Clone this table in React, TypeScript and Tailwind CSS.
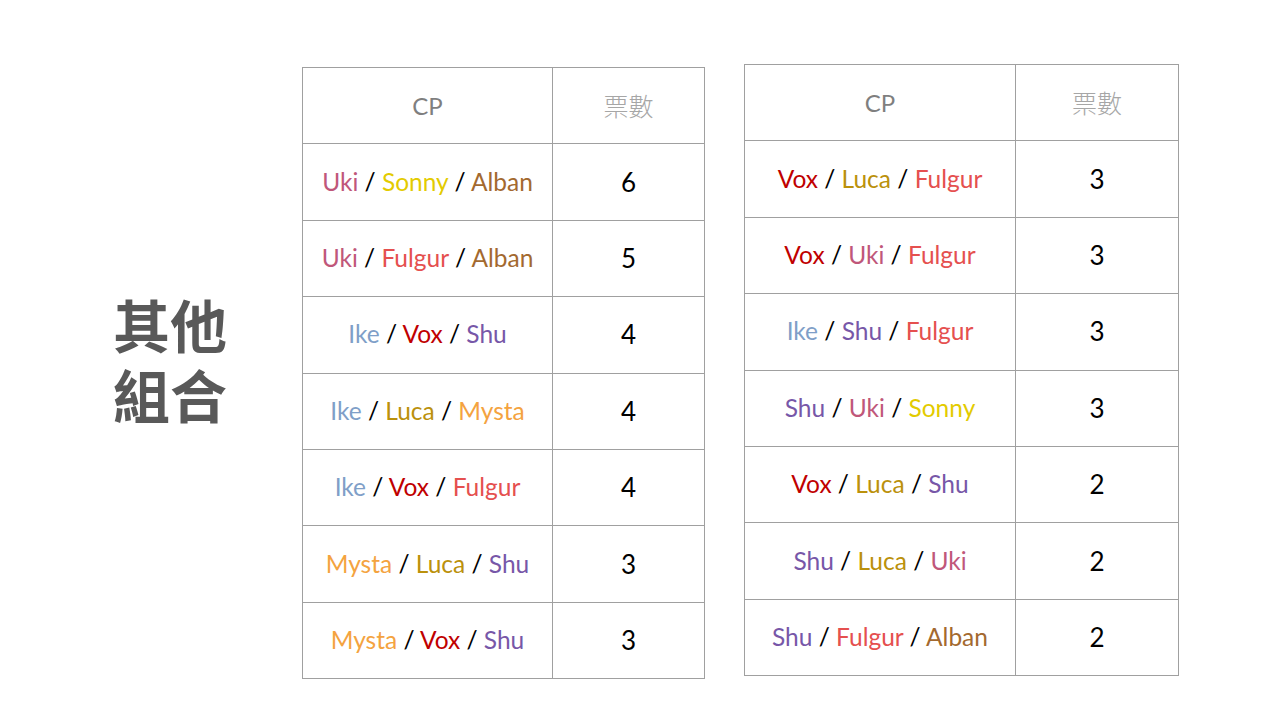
import React from "react";

const C: Record<string, string> = {
  Uki: "text-[#c0577a]",
  Sonny: "text-[#e3cb00]",
  Alban: "text-[#a3692f]",
  Fulgur: "text-[#e5504f]",
  Ike: "text-[#7f9fc8]",
  Vox: "text-[#c00000]",
  Shu: "text-[#7757a8]",
  Luca: "text-[#bb910c]",
  Mysta: "text-[#f4a340]",
};

const left: [string[], number][] = [
  [["Uki", "Sonny", "Alban"], 6],
  [["Uki", "Fulgur", "Alban"], 5],
  [["Ike", "Vox", "Shu"], 4],
  [["Ike", "Luca", "Mysta"], 4],
  [["Ike", "Vox", "Fulgur"], 4],
  [["Mysta", "Luca", "Shu"], 3],
  [["Mysta", "Vox", "Shu"], 3],
];

const right: [string[], number][] = [
  [["Vox", "Luca", "Fulgur"], 3],
  [["Vox", "Uki", "Fulgur"], 3],
  [["Ike", "Shu", "Fulgur"], 3],
  [["Shu", "Uki", "Sonny"], 3],
  [["Vox", "Luca", "Shu"], 2],
  [["Shu", "Luca", "Uki"], 2],
  [["Shu", "Fulgur", "Alban"], 2],
];

function Names({ names }: { names: string[] }) {
  return (
    <>
      {names.map((n, i) => (
        <React.Fragment key={i}>
          {i > 0 && <span className="text-black"> / </span>}
          <span className={C[n]}>{n}</span>
        </React.Fragment>
      ))}
    </>
  );
}

function VoteTable({
  rows,
  colA,
  colB,
}: {
  rows: [string[], number][];
  colA: string;
  colB: string;
}) {
  return (
    <table className="border-collapse border border-[#a0a0a0] font-['Lato','Liberation_Sans',sans-serif]">
      <thead>
        <tr className="h-[76.4px]">
          <th className={`${colA} border border-[#a0a0a0] text-[24px] font-normal text-[#7f7f7f]`}>
            CP
          </th>
          <th
            className={`${colB} border border-[#a0a0a0] font-['Noto_Sans_CJK_TC',sans-serif] text-[25px] font-light text-[#a6a6a6]`}
          >
            票數
          </th>
        </tr>
      </thead>
      <tbody>
        {rows.map(([names, n], i) => (
          <tr key={i} className="h-[76.4px]">
            <td className="border border-[#a0a0a0] text-center text-[24.5px]">
              <Names names={names} />
            </td>
            <td className="border border-[#a0a0a0] text-center text-[26px] text-black">
              {n}
            </td>
          </tr>
        ))}
      </tbody>
    </table>
  );
}

export default function App() {
  return (
    <div className="flex h-[720px] w-[1280px] items-start bg-white pl-[113px]">
      <div className="mt-[295px] flex w-[189px] flex-col gap-[13px] font-['Noto_Sans_CJK_TC',sans-serif] text-[57px] font-bold leading-none text-[#595959]">
        <div>其他</div>
        <div>組合</div>
      </div>
      <div className="mt-[67px]">
        <VoteTable rows={left} colA="w-[250px]" colB="w-[152px]" />
      </div>
      <div className="ml-[39px] mt-[64px]">
        <VoteTable rows={right} colA="w-[271px]" colB="w-[163px]" />
      </div>
    </div>
  );
}
